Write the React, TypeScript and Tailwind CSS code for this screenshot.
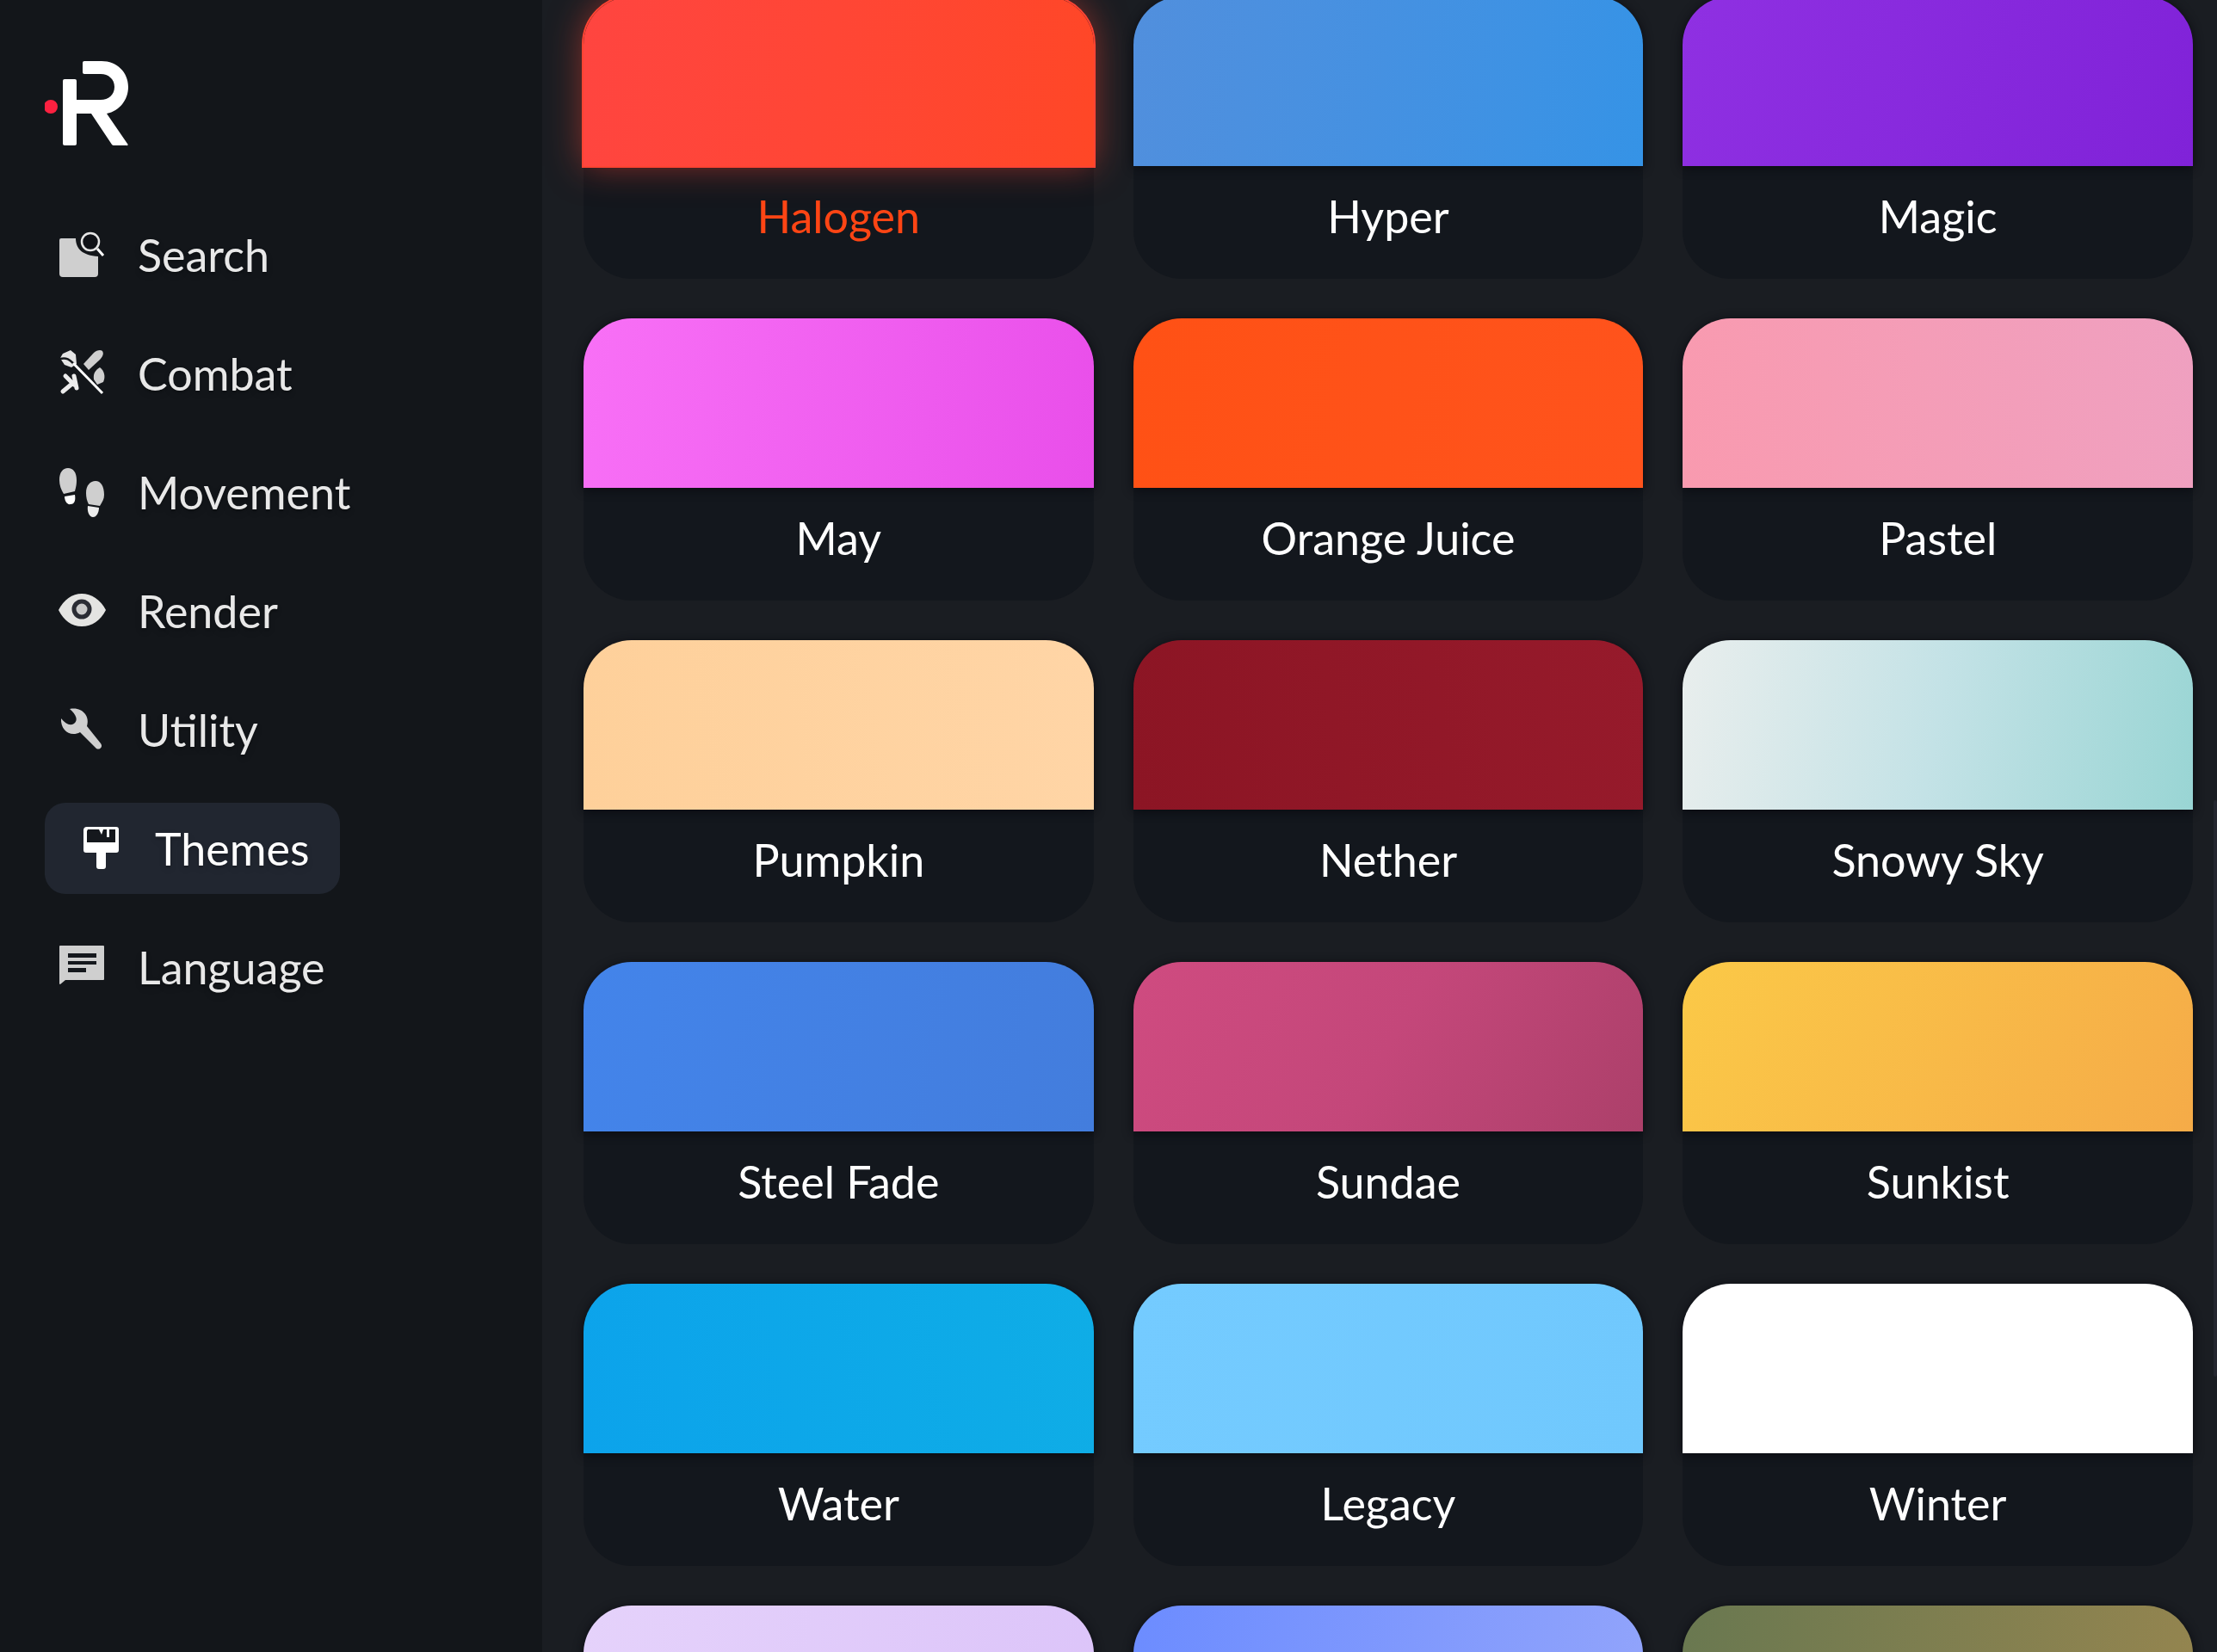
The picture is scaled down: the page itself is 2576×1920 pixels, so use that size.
import type { ReactNode } from "react";
import clsx from "clsx";

interface Category {
  label: string;
  icon: ReactNode;
  active?: boolean;
}

interface Theme {
  id: number;
  name?: string;
  swatch: string;
  selected?: boolean;
}

const categories: Category[] = [
  {
    label: "Search",
    icon: (
      <svg viewBox="0 0 56 56" className="size-14" fill="currentColor">
        <path d="M3 9h17c0 12 8 20 26 21v20a4 4 0 0 1-4 4H5a4 4 0 0 1-4-4V11a2 2 0 0 1 2-2z" />
        <circle cx="37" cy="13" r="10" fill="#101217" stroke="#e6e6e6" strokeWidth="2.5" />
        <path d="M45 21l7 8" stroke="white" strokeWidth="3" />
      </svg>
    ),
  },
  {
    label: "Combat",
    icon: (
      <svg viewBox="0 0 56 56" className="size-14" fill="currentColor">
        <path d="M2 10l3-5 9-4 6 5 1 11-6 4-8-3-4-6z" fill="#e4e4e4" />
        <path d="M2 11c7-2 11 1 16 6" stroke="#14171a" strokeWidth="2.5" fill="none" />
        <path d="M17 16L51 51" stroke="white" strokeWidth="3" />
        <path d="M29 17L41 4c3-3 8-4 10-2 2 3 0 7-3 10L35 24z" />
        <path d="M48 21c5 4 7 10 4 17l-7 3-4-6c-1-7 2-11 7-14z" />
        <path
          d="M8 31l10 10M18 31l3 14M17 39L5 49"
          stroke="#ececec"
          strokeWidth="5"
          strokeLinecap="round"
        />
      </svg>
    ),
  },
  {
    label: "Movement",
    icon: (
      <svg viewBox="0 0 56 60" className="h-15 w-14" fill="currentColor">
        <path d="M1 16C1 7 5 2 11 2s10 5 10 14c0 6-1 9-2 13L6 32C3 27 1 22 1 16z" />
        <path d="M7 35l12-2c1 6 0 11-5 11-4 1-7-4-7-9z" fill="white" />
        <path d="M32 31c0-9 5-14 11-14s10 6 10 16c0 5-2 8-5 13l-13-2c-2-4-3-8-3-13z" />
        <path d="M34 46l13 2c0 6-3 11-7 11s-7-6-6-13z" fill="#ececec" />
      </svg>
    ),
  },
  {
    label: "Render",
    icon: (
      <svg viewBox="0 0 56 56" className="size-14" fill="currentColor">
        <path
          d="M0 27C6 15 16 8 27 8s22 7 28 19c-6 12-16 19-28 19S6 39 0 27z"
          fill="#e4e4e2"
        />
        <circle cx="27" cy="26" r="9" fill="#c9c9c9" stroke="#2a2c34" strokeWidth="5" />
      </svg>
    ),
  },
  {
    label: "Utility",
    icon: (
      <svg viewBox="0 0 56 56" className="size-14" fill="currentColor">
        <path d="M13 4c14-3 24 8 20 20l16 20c3 4-1 8-5 6L25 31C14 37 2 29 3 15c5 6 10 9 15 6 5-4 3-10-5-17z" />
      </svg>
    ),
  },
  {
    label: "Themes",
    active: true,
    icon: (
      <svg viewBox="0 0 44 52" className="h-13 w-11" fill="currentColor">
        <path d="M5 1h34a3 3 0 0 1 3 3v24a3 3 0 0 1-3 3H27v16a3 3 0 0 1-3 3h-5a3 3 0 0 1-3-3V31H4a3 3 0 0 1-3-3V5a4 4 0 0 1 4-4z" />
        <path d="M6 4h13l3 6 2-6h4v9h3V4h7v15H5V6z" fill="#15181d" />
      </svg>
    ),
  },
  {
    label: "Language",
    icon: (
      <svg viewBox="0 0 56 56" className="size-14" fill="currentColor">
        <path d="M2 3h50a1 1 0 0 1 1 1v38a1 1 0 0 1-1 1H8l-6 5a1 1 0 0 1-1-1V4a1 1 0 0 1 1-1z" />
        <path d="M11 12h33v5H11zM11 21h33v4H11zM11 29h21v5H11z" fill="#15181d" />
      </svg>
    ),
  },
];

const themes: Theme[] = [
  { id: 1, name: "Halogen", swatch: "bg-linear-100 from-[#ff4540] to-[#ff4726]", selected: true },
  { id: 2, name: "Hyper", swatch: "bg-linear-100 from-[#518fdd] to-[#3593e6]" },
  { id: 3, name: "Magic", swatch: "bg-linear-110 from-[#8f30e2] to-[#8022d8]" },
  { id: 4, name: "May", swatch: "bg-linear-100 from-[#f870f6] to-[#e94eea]" },
  { id: 5, name: "Orange Juice", swatch: "bg-linear-100 from-[#ff5115] to-[#ff531c]" },
  { id: 6, name: "Pastel", swatch: "bg-linear-80 from-[#f99aaf] to-[#efa0c0]" },
  { id: 7, name: "Pumpkin", swatch: "bg-linear-80 from-[#fed09a] to-[#ffd5a6]" },
  { id: 8, name: "Nether", swatch: "bg-linear-80 from-[#8c1524] to-[#961a2b]" },
  { id: 9, name: "Snowy Sky", swatch: "bg-linear-100 from-[#e9eeed] via-[#c3e2e6] to-[#99d5d4]" },
  { id: 10, name: "Steel Fade", swatch: "bg-linear-100 from-[#4384ea] to-[#437ddd]" },
  { id: 11, name: "Sundae", swatch: "bg-linear-120 from-[#cf4b80] via-[#c4477a] to-[#ac406a]" },
  { id: 12, name: "Sunkist", swatch: "bg-linear-120 from-[#fbc947] to-[#f5ab48]" },
  { id: 13, name: "Water", swatch: "bg-linear-80 from-[#0ca3eb] to-[#0fade6]" },
  { id: 14, name: "Legacy", swatch: "bg-linear-100 from-[#74cbff] to-[#70c8fd]" },
  { id: 15, name: "Winter", swatch: "bg-white" },
  { id: 16, swatch: "bg-linear-100 from-[#e5d2fb] to-[#dcc4f9]" },
  { id: 17, swatch: "bg-linear-100 from-[#6c8cff] to-[#92a4fb]" },
  { id: 18, swatch: "bg-linear-100 from-[#697850] to-[#95854f]" },
];

const Logo = () => (
  <svg viewBox="0 0 100 100" className="ml-13 size-25" aria-hidden="true">
    <circle cx="7" cy="54" r="8" fill="#fb2140" />
    <path
      d="M23 22h12a2 2 0 0 1 2 2v22h28c9 0 16-6 16-15s-7-15-16-15H46a2 2 0 0 1-2-2V3a2 2 0 0 1 2-2h20c18 0 31 13 31 30 0 15-10 28-25 31l24 35a1 1 0 0 1-1 2H80a3 3 0 0 1-2-1L54 62H37v35a2 2 0 0 1-2 2H23a2 2 0 0 1-2-2V24a2 2 0 0 1 2-2z"
      fill="white"
    />
  </svg>
);

const CategoryButton = ({ label, icon, active }: Category) => (
  <button
    type="button"
    className={clsx(
      "flex h-[106px] items-center rounded-3xl text-[52px] leading-none",
      active
        ? "gap-10 bg-[#212630] pr-9 pl-11 text-white"
        : "gap-9 px-4 text-[#cfcfcf]"
    )}
  >
    {icon}
    <span
      className={clsx(
        "text-shadow-lg",
        active ? "text-white" : "text-[#e8e8e8]"
      )}
    >
      {label}
    </span>
  </button>
);

const ThemeCard = ({ name, swatch, selected }: Theme) => (
  <button
    type="button"
    aria-pressed={!!selected}
    className="flex flex-col rounded-[56px] bg-[#13171d] text-center"
  >
    <span
      className={clsx(
        "h-[197px] w-full rounded-t-[56px]",
        swatch,
        selected
          ? "shadow-[0_0_40px_#ff463380] outline-2 outline-[#ff4433]"
          : "shadow-[0_2px_12px_#0a0b10]"
      )}
    />
    <span
      className={clsx(
        "flex h-[131px] w-full items-start justify-center pt-7 text-[52px] leading-15",
        selected ? "text-[#ff4514]" : "text-white"
      )}
    >
      {name}
    </span>
  </button>
);

const App = () => {
  return (
    <div className="relative flex h-screen overflow-hidden bg-[#1a1d22] font-['Lato',sans-serif]">
      <aside className="flex w-[630px] shrink-0 flex-col bg-[#13161a] pt-[70px]">
        <Logo />
        <nav className="mt-[73px] flex flex-col items-start gap-8 pl-13">
          {categories.map((category) => (
            <CategoryButton key={category.label} {...category} />
          ))}
        </nav>
      </aside>

      <main className="min-w-0 flex-1 overflow-hidden pr-7 pl-12">
        <div className="-mt-1 grid grid-cols-3 gap-[46px]">
          {themes.map((theme) => (
            <ThemeCard key={theme.id} {...theme} />
          ))}
        </div>
      </main>

      {/* scroll thumb */}
      <div className="absolute top-[930px] right-0 h-[670px] w-1 rounded-full bg-[#24262f]" />
    </div>
  );
};

export default App;
